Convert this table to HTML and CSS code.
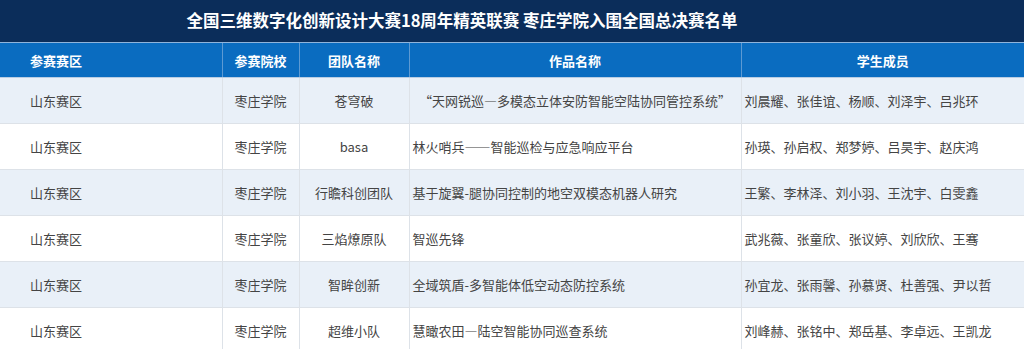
FILE: index.html
```html
<!DOCTYPE html>
<html lang="zh-CN">
<head>
  <meta charset="UTF-8" />
  <meta name="viewport" content="width=device-width, initial-scale=1.0"/>
  <title>枣庄学院入围全国总决赛名单</title>
  <link rel="stylesheet" href="styles.css">
</head>
<body>
  <div class="page">
    <div class="title-bar">全国三维数字化创新设计大赛18周年精英联赛 枣庄学院入围全国总决赛名单</div>
    <table class="list">
      <colgroup>
        <col class="c-area" />
        <col class="c-school" />
        <col class="c-team" />
        <col class="c-work" />
        <col class="c-members" />
      </colgroup>
      <thead>
        <tr>
          <th class="left">参赛赛区</th>
          <th>参赛院校</th>
          <th>团队名称</th>
          <th>作品名称</th>
          <th>学生成员</th>
        </tr>
      </thead>
      <tbody>
        <tr>
          <td class="left">山东赛区</td>
          <td class="mid">枣庄学院</td>
          <td class="mid">苍穹破</td>
          <td class="mid">“天网锐巡—多模态立体安防智能空陆协同管控系统”</td>
          <td>刘晨耀、张佳谊、杨顺、刘泽宇、吕兆环</td>
        </tr>
        <tr>
          <td class="left">山东赛区</td>
          <td class="mid">枣庄学院</td>
          <td class="mid">basa</td>
          <td>林火哨兵——智能巡检与应急响应平台</td>
          <td>孙瑛、孙启权、郑梦婷、吕昊宇、赵庆鸿</td>
        </tr>
        <tr>
          <td class="left">山东赛区</td>
          <td class="mid">枣庄学院</td>
          <td class="mid">行瞻科创团队</td>
          <td>基于旋翼-腿协同控制的地空双模态机器人研究</td>
          <td>王繁、李林泽、刘小羽、王沈宇、白雯鑫</td>
        </tr>
        <tr>
          <td class="left">山东赛区</td>
          <td class="mid">枣庄学院</td>
          <td class="mid">三焰燎原队</td>
          <td>智巡先锋</td>
          <td>武兆薇、张童欣、张议婷、刘欣欣、王骞</td>
        </tr>
        <tr>
          <td class="left">山东赛区</td>
          <td class="mid">枣庄学院</td>
          <td class="mid">智眸创新</td>
          <td>全域筑盾-多智能体低空动态防控系统</td>
          <td>孙宜龙、张雨馨、孙慕贤、杜善强、尹以哲</td>
        </tr>
        <tr>
          <td class="left">山东赛区</td>
          <td class="mid">枣庄学院</td>
          <td class="mid">超维小队</td>
          <td>慧瞰农田—陆空智能协同巡查系统</td>
          <td>刘峰赫、张铭中、郑岳基、李卓远、王凯龙</td>
        </tr>
      </tbody>
    </table>
  </div>
</body>
</html>
```

FILE: styles.css
```css
body {
  margin: 0;
  font-family: "Noto Sans CJK SC", "Noto Sans", sans-serif;
  background: #ffffff;
}
.page {
  width: 1024px;
}
.title-bar {
  height: 43px;
  line-height: 41px;
  background: #0b2d5a;
  color: #ffffff;
  font-size: 16.5px;
  font-weight: bold;
  text-align: center;
  padding-right: 100px;
  border-bottom: 1px solid #8fb4dc;
  box-sizing: border-box;
}
.list {
  width: 100%;
  border-collapse: collapse;
  table-layout: fixed;
  font-size: 13px;
}
.c-area { width: 222px; }
.c-school { width: 77px; }
.c-team { width: 110px; }
.c-work { width: 332px; }
th {
  height: 34px;
  padding: 0;
  background: #0a6cc0;
  color: #ffffff;
  font-weight: bold;
  text-align: center;
  border-left: 1px solid #5d9ad3;
  border-bottom: 1px solid #b9cde3;
}
th:first-child,
td:first-child {
  border-left: none;
}
th.left {
  text-align: left;
  padding-left: 30px;
}
td {
  height: 45px;
  padding: 0 0 0 3px;
  color: #444444;
  border-left: 1px solid #dde2e8;
  border-bottom: 1px solid #dde2e8;
  white-space: nowrap;
  overflow: hidden;
}
td.left {
  padding-left: 30px;
}
td.mid {
  text-align: center;
  padding-left: 0;
}
tbody tr:nth-child(odd) td {
  background: #e9f0f8;
}
tbody tr:nth-child(even) td {
  background: #ffffff;
}
```
